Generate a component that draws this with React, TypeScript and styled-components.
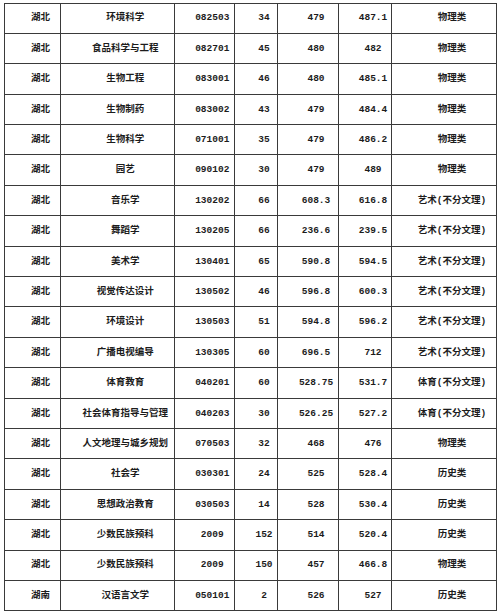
import React from "react";
import styled, { createGlobalStyle } from "styled-components";

type Row = [string, string, string, string, string, string, string];

const rows: Row[] = [
  ["湖北", "环境科学", "082503", "34", "479", "487.1", "物理类"],
  ["湖北", "食品科学与工程", "082701", "45", "480", "482", "物理类"],
  ["湖北", "生物工程", "083001", "46", "480", "485.1", "物理类"],
  ["湖北", "生物制药", "083002", "43", "479", "484.4", "物理类"],
  ["湖北", "生物科学", "071001", "35", "479", "486.2", "物理类"],
  ["湖北", "园艺", "090102", "30", "479", "489", "物理类"],
  ["湖北", "音乐学", "130202", "66", "608.3", "616.8", "艺术(不分文理)"],
  ["湖北", "舞蹈学", "130205", "66", "236.6", "239.5", "艺术(不分文理)"],
  ["湖北", "美术学", "130401", "65", "590.8", "594.5", "艺术(不分文理)"],
  ["湖北", "视觉传达设计", "130502", "46", "596.8", "600.3", "艺术(不分文理)"],
  ["湖北", "环境设计", "130503", "51", "594.8", "596.2", "艺术(不分文理)"],
  ["湖北", "广播电视编导", "130305", "60", "696.5", "712", "艺术(不分文理)"],
  ["湖北", "体育教育", "040201", "60", "528.75", "531.7", "体育(不分文理)"],
  ["湖北", "社会体育指导与管理", "040203", "30", "526.25", "527.2", "体育(不分文理)"],
  ["湖北", "人文地理与城乡规划", "070503", "32", "468", "476", "物理类"],
  ["湖北", "社会学", "030301", "24", "525", "528.4", "历史类"],
  ["湖北", "思想政治教育", "030503", "14", "528", "530.4", "历史类"],
  ["湖北", "少数民族预科", "2009", "152", "514", "520.4", "历史类"],
  ["湖北", "少数民族预科", "2009", "150", "457", "466.8", "物理类"],
  ["湖南", "汉语言文学", "050101", "2", "526", "527", "历史类"],
];

const colWidths = [56, 113.5, 60.5, 43, 61, 53, 105];

const GlobalStyle = createGlobalStyle`
  html, body {
    margin: 0;
    padding: 0;
    background: #ffffff;
  }
`;

const Page = styled.div`
  width: 500px;
  height: 611px;
  overflow: hidden;
  padding: 2.5px 4px 0 4px;
  box-sizing: border-box;
  background: #fff;
`;

const Table = styled.table`
  width: 492px;
  border-collapse: collapse;
  table-layout: fixed;
  font-family: "Liberation Mono", "Noto Sans CJK SC", monospace;
  font-size: 9.5px;
  font-weight: 700;
  color: #1c1c1c;
`;

const Tr = styled.tr`
  height: 30.4px;
`;

const Td = styled.td`
  border: 1px solid #3a3a3a;
  padding: 0 0 0 16px;
  text-align: center;
  vertical-align: middle;
  white-space: nowrap;
  line-height: 1;
`;

export default function App() {
  return (
    <>
      <GlobalStyle />
      <Page>
        <Table>
          <colgroup>
            {colWidths.map((w, i) => (
              <col key={i} style={{ width: w }} />
            ))}
          </colgroup>
          <tbody>
            {rows.map((row, r) => (
              <Tr key={r}>
                {row.map((cell, c) => (
                  <Td key={c}>{cell}</Td>
                ))}
              </Tr>
            ))}
          </tbody>
        </Table>
      </Page>
    </>
  );
}
